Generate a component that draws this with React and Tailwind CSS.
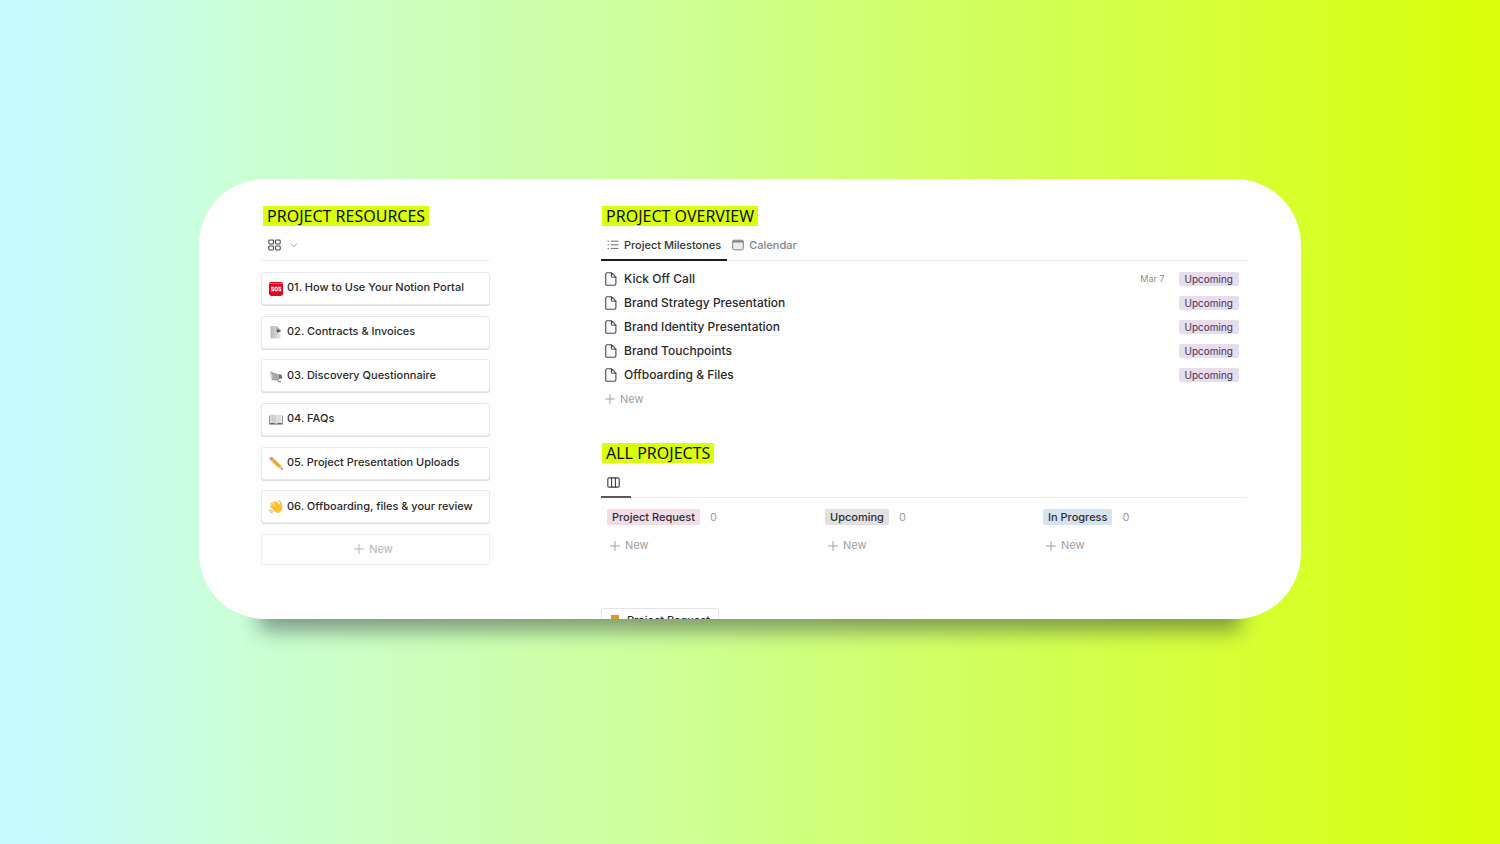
import React from "react";

const svg = { fill: "none", stroke: "currentColor", strokeLinecap: "round", strokeLinejoin: "round" };

function GalleryIcon() {
  return (
    <svg className="h-3 w-[13px]" viewBox="0 0 13 12" {...svg} strokeWidth="1.1" aria-hidden="true">
      <rect x="0.8" y="1" width="4.7" height="4" rx="0.9" />
      <rect x="7.5" y="1" width="4.7" height="4" rx="0.9" />
      <rect x="0.8" y="7" width="4.7" height="4" rx="0.9" />
      <rect x="7.5" y="7" width="4.7" height="4" rx="0.9" />
    </svg>
  );
}

function ChevronIcon() {
  return (
    <svg className="h-2 w-2" viewBox="0 0 8 8" {...svg} strokeWidth="1" aria-hidden="true">
      <path d="M1.2 2.8 4 5.6l2.8-2.8" />
    </svg>
  );
}

function ListIcon() {
  return (
    <svg className="h-3 w-3" viewBox="0 0 12 12" {...svg} strokeWidth="1" aria-hidden="true">
      <path d="M4 2.2h7M4 5.8h7M4 9.4h7M1 2.2h.6M1 5.8h.6M1 9.4h.6" />
    </svg>
  );
}

function CalendarIcon() {
  return (
    <svg className="h-3 w-3" viewBox="0 0 12 12" aria-hidden="true">
      <rect x="0.700" y="1.200" width="10.600" height="9.600" rx="1.2" fill="#ececec" stroke="#868487" />
      <path d="M.7 2.4h10.600" stroke="#868487" strokeWidth="2" />
    </svg>
  );
}

function BoardIcon() {
  return (
    <svg className="h-[11px] w-[13px]" viewBox="0 0 13 11" {...svg} strokeWidth="1.1" aria-hidden="true">
      <rect x="0.8" y="0.9" width="11.4" height="9.2" rx="1.4" />
      <path d="M4.6 1v9M8.4 1v9" />
    </svg>
  );
}

function PageIcon() {
  return (
    <svg className="h-[14px] w-3 shrink-0" viewBox="0 0 12 14" {...svg} strokeWidth="1.1" aria-hidden="true">
      <path d="M2.1.8h4.5l4.300 4.400v6.600c0 .9-.5 1.400-1.400 1.400H2.100c-.9 0-1.400-.5-1.400-1.400V2.200C.7 1.300 1.200.8 2.100.8Z" />
      <path d="M6.500.9v3.300c0 .7.400 1.100 1.100 1.100h3.200" />
    </svg>
  );
}

function PlusIcon() {
  return (
    <svg className="h-[10px] w-[10px]" viewBox="0 0 10 10" {...svg} strokeWidth="1" aria-hidden="true">
      <path d="M5 .6v8.800M.6 5h8.800" />
    </svg>
  );
}

function SosIcon() {
  return (
    <svg className="h-[14px] w-[14px]" viewBox="0 0 14 14" aria-hidden="true">
      <rect width="14" height="14" rx="2.400" fill="#e3061c" />
      <path d="M1 1.500h12" stroke="#f4525e" strokeWidth="1" />
      <g fill="none" stroke="#fff" strokeWidth="1.100">
        <path d="M4.700 5.400H2.600v1.600h1.800v1.800H2.200M11.900 5.400H9.800v1.600h1.800v1.800H9.400" />
        <rect x="6" y="5.400" width="2.200" height="3.400" rx=".7" />
      </g>
    </svg>
  );
}

function ContractIcon() {
  return (
    <svg className="h-[14px] w-[14px]" viewBox="0 0 14 14" aria-hidden="true">
      <defs>
        <linearGradient id="sheet" x1="0" x2="1">
          <stop offset="0" stopColor="#b9b9b9" />
          <stop offset="1" stopColor="#e9e9e9" />
        </linearGradient>
      </defs>
      <path d="M1.500 1h6l4.200 4.200V13.500H1.500Z" fill="url(#sheet)" />
      <path d="M7.500 1v4.200h4.200Z" fill="#a5a5a5" />
      <path d="M7.500 4.400 12.600 5.700 8.200 7.800Z" fill="#4c4c4c" />
    </svg>
  );
}

function MegaphoneIcon() {
  return (
    <svg className="h-[14px] w-[14px]" viewBox="0 0 14 14" aria-hidden="true">
      <path d="M1 2.200 11.500 6l1.800 4L3 11.500Z" fill="#a9a9a9" />
      <path d="M1 2.200 3.400 6.500 3 11.500C1.300 9 .700 5 1 2.200Z" fill="#d6d6d6" />
      <path d="M9.800 5.200 12.600 5.800 13.400 9l-3.200.5Z" fill="#747474" />
      <path d="m5.500 11 3.300-.6.700 2.200 2.500.1" fill="none" stroke="#8e8e8e" strokeWidth="1.200" />
    </svg>
  );
}

function BookIcon() {
  return (
    <svg className="h-[14px] w-[14px]" viewBox="0 0 14 14" aria-hidden="true">
      <path d="M.3 3.500h13.400v9H.3Z" fill="#5d5d5d" />
      <path d="M1 2.800c2-.6 4.300-.6 6 .4v8.500c-1.700-.9-4-.9-6-.3Z" fill="#dedede" />
      <path d="M13 2.800c-2-.6-4.300-.6-6 .4v8.500c1.700-.9 4-.9 6-.3Z" fill="#f1f1f1" />
      <path d="M7 3.200v8.600M3.200 3v8M5 3v8M9.200 3v8M11 3v8" stroke="#b3b3b3" strokeWidth=".6" />
    </svg>
  );
}

function PencilIcon() {
  return (
    <svg className="h-[14px] w-[14px]" viewBox="0 0 14 14" aria-hidden="true">
      <path d="M.6 3.200C0 2 1.800.200 3 .8L4.700 2.300 2.100 4.900Z" fill="#ee8f86" />
      <path d="m2.100 4.900 2.600-2.600 1 .9-2.600 2.700Z" fill="#a7b0b5" />
      <path d="m3.100 5.900 2.600-2.700 6.500 6.200-2.700 2.700Z" fill="#f9b520" />
      <path d="m4.500 4.500 6.400 6.400" stroke="#d98516" strokeWidth=".7" />
      <path d="m12.200 9.400 1.500 4.300-4.200-1.600Z" fill="#edc79a" />
      <path d="m13.100 12 .6 1.700-1.700-.6Z" fill="#333" />
    </svg>
  );
}

function WaveIcon() {
  return (
    <svg className="h-[14px] w-[14px]" viewBox="0 0 14 14" aria-hidden="true">
      <g fill="none" stroke="#fbc42c" strokeLinecap="round" strokeWidth="2">
        <path d="m2 6.600 4 4M2.400 3.800l5 5M4.600 2.300l5 5M7 2.200l3.200 3.200" />
      </g>
      <path d="M4.500 8.500 9.300 4.400c.8.700 1 .8 1.300.3.500-.8-.2-2.200.8-2.600 1-.3 1.400 1.200 1.700 2.900.5 3-.1 5.200-1.600 6.700-1.900 1.900-4.300 1.200-5.800-.3Z" fill="#fbc42c" />
      <path d="m4 6.200 3 3M6 4.700l2.700 2.700" stroke="#e39a1c" strokeWidth=".6" />
      <g fill="none" stroke="#8f9498" strokeLinecap="round" strokeWidth=".8">
        <path d="M.6 10.200c.3 1.300 1.200 2.300 2.600 2.700M2.200 10c.2.700.7 1.200 1.400 1.500M9.400.8c1 .2 1.700.6 2.200 1.200" />
      </g>
    </svg>
  );
}

const resources = [
  ["01. How to Use Your Notion Portal", SosIcon],
  ["02. Contracts & Invoices", ContractIcon],
  ["03. Discovery Questionnaire", MegaphoneIcon],
  ["04. FAQs", BookIcon],
  ["05. Project Presentation Uploads", PencilIcon],
  ["06. Offboarding, files & your review", WaveIcon],
];

const milestones = [
  { name: "Kick Off Call", date: "Mar 7" },
  { name: "Brand Strategy Presentation" },
  { name: "Brand Identity Presentation" },
  { name: "Brand Touchpoints" },
  { name: "Offboarding & Files" },
];

const columns = [
  { name: "Project Request", color: "bg-[#f2dce7]" },
  { name: "Upcoming", color: "bg-[#e2e1e3]" },
  { name: "In Progress", color: "bg-[#d5e4ef]" },
];

function Heading({ children }) {
  return (
    <h2 className="flex">
      <span className="bg-[#d9ff0b] px-1 font-['Noto_Sans',sans-serif] text-[16px] leading-5 text-[#111]">{children}</span>
    </h2>
  );
}

function Resources() {
  return (
    <section className="w-[229px] shrink-0">
      <div className="pl-0.5">
        <Heading>PROJECT RESOURCES</Heading>
      </div>
      <div className="flex h-[35px] items-center border-b border-[#eeedef] pl-[7px]">
        <button type="button" aria-label="Gallery view" className="flex items-center gap-[9px] pt-1">
          <span className="text-[#4a494c]"><GalleryIcon /></span>
          <span className="text-[#a5a4a7]"><ChevronIcon /></span>
        </button>
      </div>
      <ul className="mt-[11px] flex h-[293px] flex-col justify-between">
        {resources.map(([name, Icon]) => (
          <li key={name}>
            <a href="#" className="flex h-[33px] items-center gap-1 rounded-[3px] border border-[#e9e8ea] bg-white px-[7px] pb-0.5 text-[11px] font-medium text-[#2b2a2d] shadow-[0_1px_1px_#dddcde]">
              <span className="pt-0.5"><Icon /></span>
              <span>{name}</span>
            </a>
          </li>
        ))}
        <li>
          <button type="button" className="flex h-[31px] w-full items-center justify-center gap-[5px] border border-[#f0eff1] pr-1 text-[11px] text-[#b5b4b7]">
            <PlusIcon /> New
          </button>
        </li>
      </ul>
    </section>
  );
}

function Overview() {
  return (
    <section>
      <div className="pl-px">
        <Heading>PROJECT OVERVIEW</Heading>
      </div>
      <div className="flex h-[35px] border-b border-[#eeedef] text-[11px] font-medium">
        <button type="button" className="-mb-px flex items-center gap-[5px] border-b-2 border-[#1c1b1e] px-[6px] pt-[5px] text-[#343336]">
          <span className="text-[#6d6c6f]"><ListIcon /></span>
          Project Milestones
        </button>
        <button type="button" className="flex items-center gap-[5px] pl-[5px] pt-1 text-[#868487]">
          <CalendarIcon />
          Calendar
        </button>
      </div>
      <ul className="mt-[6px]">
        {milestones.map(({ name, date }) => (
          <li key={name} className="flex h-6 items-center pl-1 pr-2">
            <span className="text-[#4a494c]"><PageIcon /></span>
            <a href="#" className="ml-[7px] border-b border-[#efeef0] text-[12px] leading-4 font-medium text-[#2b2a2d]">{name}</a>
            <span className="ml-auto text-[9px] text-[#8f8e91]">{date}</span>
            <span className="ml-[14px] rounded-[2px] bg-[#e8dcee] px-1.5 text-[10px] leading-[14px] text-[#45334f]">Upcoming</span>
          </li>
        ))}
        <li>
          <button type="button" className="flex h-6 items-center gap-[5px] pl-1 text-[11px] text-[#a09fa2]">
            <PlusIcon /> New
          </button>
        </li>
      </ul>
    </section>
  );
}

function Projects() {
  return (
    <section className="mt-8">
      <div className="pl-px">
        <Heading>ALL PROJECTS</Heading>
      </div>
      <div className="flex h-[35px] border-b border-[#eeedef]">
        <button type="button" aria-label="Board view" className="-mb-px flex w-[30px] items-center border-b-2 border-[#5a595c] pl-[6px] pt-[5px] text-[#3c3b3e]">
          <BoardIcon />
        </button>
      </div>
      <div className="mt-[11px] grid grid-cols-[218px_218px_1fr] pl-[6px] text-[11px]">
        {columns.map(({ name, color }) => (
          <div key={name}>
            <div className="flex items-center gap-[10px]">
              <h3 className={`rounded-[2px] px-[5px] leading-4 font-medium text-[#2f2e31] ${color}`}>{name}</h3>
              <span className="text-[#a09fa2]">0</span>
            </div>
            <button type="button" className="mt-3 flex h-4 items-center gap-[5px] pl-[3px] text-[#a09fa2]">
              <PlusIcon /> New
            </button>
          </div>
        ))}
      </div>
      <a href="#" className="mt-[54px] flex h-[26px] w-[118px] items-center gap-2 rounded-[3px] border border-[#e4e3e5] pl-[9px] text-[11px] font-medium text-[#2f2e31]">
        <svg className="h-3 w-2" viewBox="0 0 8 12" aria-hidden="true">
          <path d="M0 0h8v12H0Z" fill="#d69a2b" />
        </svg>
        Project Request
      </a>
    </section>
  );
}

export default function App() {
  return (
    <div className="min-h-screen bg-[linear-gradient(90deg,#c6fbff_0%,#c6fbff_2%,#caffdc_14%,#ccffc0_26%,#ceff9c_43%,#d1ff66_62%,#d7ff2e_85%,#d9ff0c_98%)] px-6 pt-[179px] font-['Inter',sans-serif]">
      <div className="mx-auto max-w-[1102px] rounded-[66px] shadow-[0_72px_20px_-60px_rgba(40,50,60,0.48)]">
        <main className="flex h-[440px] justify-between gap-[111px] overflow-hidden rounded-[66px] bg-[#fefefe] pl-[62px] pr-[54px] pt-[27px]">
          <Resources />
          <div className="min-w-0 flex-1">
            <Overview />
            <Projects />
          </div>
        </main>
      </div>
    </div>
  );
}
